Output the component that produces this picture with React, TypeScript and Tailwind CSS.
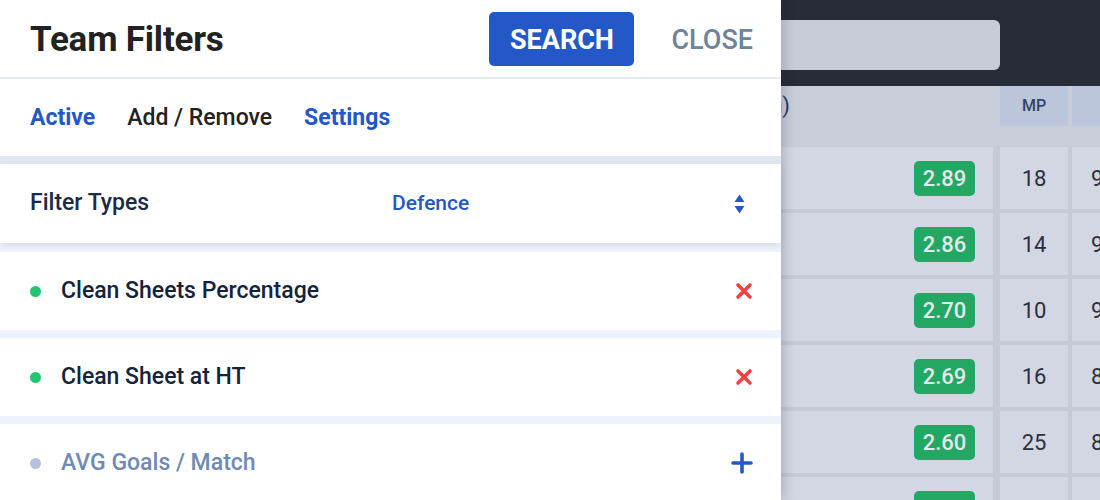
import React from "react";

const rows = [
  { avg: "2.89", mp: 18, next: "92" },
  { avg: "2.86", mp: 14, next: "91" },
  { avg: "2.70", mp: 10, next: "90" },
  { avg: "2.69", mp: 16, next: "88" },
  { avg: "2.60", mp: 25, next: "86" },
  { avg: "2.58", mp: 12, next: "85" },
];

const filters = [
  { label: "Clean Sheets Percentage", active: true },
  { label: "Clean Sheet at HT", active: true },
  { label: "AVG Goals / Match", active: false },
];

function CrossIcon() {
  return (
    <svg width="18" height="18" viewBox="0 0 18 18">
      <path d="M3 3 L15 15 M15 3 L3 15" stroke="#f4403f" strokeWidth="3.6" strokeLinecap="round" />
    </svg>
  );
}

function PlusIcon() {
  return (
    <svg width="22" height="22" viewBox="0 0 22 22">
      <path d="M11 2 V20 M2 11 H20" stroke="#2458c6" strokeWidth="3.6" strokeLinecap="round" />
    </svg>
  );
}

function SortArrows() {
  return (
    <svg width="11" height="20" viewBox="0 0 11 20">
      <path d="M5.5 0.5 L10.5 8 H0.5 Z" fill="#2458c6" />
      <path d="M5.5 19.5 L10.5 12 H0.5 Z" fill="#2458c6" />
    </svg>
  );
}

// Dimmed stats page that sits behind the drawer
function BackgroundPage() {
  return (
    <div className="flex flex-col h-full bg-[#c5cad6]">
      <div className="h-[86px] shrink-0 bg-[#282c38] flex justify-end pr-[100px] pt-[20px]">
        <div className="w-[440px] h-[50px] rounded-md bg-[#c8ccd8]" />
      </div>
      <div className="h-[60px] shrink-0 bg-[#c8cdd9] flex">
        <div className="w-[993px] shrink-0 flex justify-end pr-[203px] pt-[6px] text-[22px] text-[#26386a] leading-[28px] whitespace-nowrap">
          Team (Avg Goals / Match)
        </div>
        <div className="ml-[7px] w-[68px] shrink-0 h-[40px] bg-[#bcc6da] flex items-center justify-center text-[16px] font-medium text-[#2f4569]">
          MP
        </div>
        <div className="ml-[4px] w-[60px] shrink-0 h-[40px] bg-[#bcc6da]" />
      </div>
      <div className="flex flex-col gap-[4px] pt-[1px]">
        {rows.map((r) => (
          <div key={r.avg} className="h-[62px] shrink-0 flex">
            <div className="w-[993px] shrink-0 bg-[#d3d7e3] flex items-center justify-end pr-[18px]">
              <span className="w-[61px] h-[35px] rounded-[5px] bg-[#22a863] text-[#e3e7ee] text-[22px] font-medium flex items-center justify-center">
                {r.avg}
              </span>
            </div>
            <div className="ml-[7px] w-[68px] shrink-0 bg-[#d3d7e3] flex items-center justify-center text-[22px] text-[#2b2f38]">
              {r.mp}
            </div>
            <div className="ml-[4px] w-[60px] shrink-0 bg-[#d3d7e3] flex items-center pl-[19px] text-[22px] text-[#2b2f38] whitespace-nowrap">
              {r.next}
            </div>
          </div>
        ))}
      </div>
    </div>
  );
}

export default function App() {
  return (
    <div className="relative w-[1100px] h-[500px] overflow-hidden font-['Roboto',sans-serif]">
      <BackgroundPage />

      {/* Filter drawer */}
      <div className="absolute left-0 top-0 w-[781px] h-full bg-[#eef2fa] flex flex-col shadow-[4px_0_10px_rgba(20,30,50,0.18)]">
        <div className="h-[79px] shrink-0 bg-white border-b-2 border-[#e6eaf1] flex items-center justify-between pl-[30px] pr-[28px]">
          <h1 className="pt-[3px] text-[35px] font-bold text-[#222222] tracking-[-0.2px]">Team Filters</h1>
          <div className="flex items-center gap-[37px]">
            <button className="w-[145px] h-[54px] pt-[3px] rounded-[5px] bg-[#2458c6] text-white text-[27px] font-bold">SEARCH</button>
            <button className="pt-[3px] text-[27px] font-medium text-[#6f8399]">CLOSE</button>
          </div>
        </div>

        <div className="h-[77px] shrink-0 bg-white flex items-center gap-[32px] pl-[30px] pt-[2px]">
          <span className="text-[23px] font-bold text-[#2458c6]">Active</span>
          <span className="text-[23px] font-medium text-[#222222]">Add / Remove</span>
          <span className="text-[23px] font-bold text-[#2458c6]">Settings</span>
        </div>

        <div className="h-[8px] shrink-0 bg-[#e2e7ef]" />

        <div className="h-[79px] shrink-0 bg-white flex items-center pl-[30px] pr-[36px] shadow-[0_2px_6px_rgba(40,60,100,0.12)] relative">
          <span className="w-[362px] text-[23px] font-medium text-[#1c2b45]">Filter Types</span>
          <span className="flex-1 text-[21px] font-medium text-[#2458c6]">Defence</span>
          <SortArrows />
        </div>

        <div className="flex flex-col gap-[8px] pt-[9px]">
          {filters.map((f) => (
            <div key={f.label} className="h-[78px] shrink-0 bg-white flex items-center pl-[30px] pr-[28px]">
              <span className={`w-[11px] h-[11px] rounded-full ${f.active ? "bg-[#22c66e]" : "bg-[#b4c2de]"}`} />
              <span className={`ml-[20px] flex-1 text-[23px] font-medium ${f.active ? "text-[#15233b]" : "text-[#6f8ab8]"}`}>
                {f.label}
              </span>
              {f.active ? <CrossIcon /> : <PlusIcon />}
            </div>
          ))}
        </div>
      </div>
    </div>
  );
}
